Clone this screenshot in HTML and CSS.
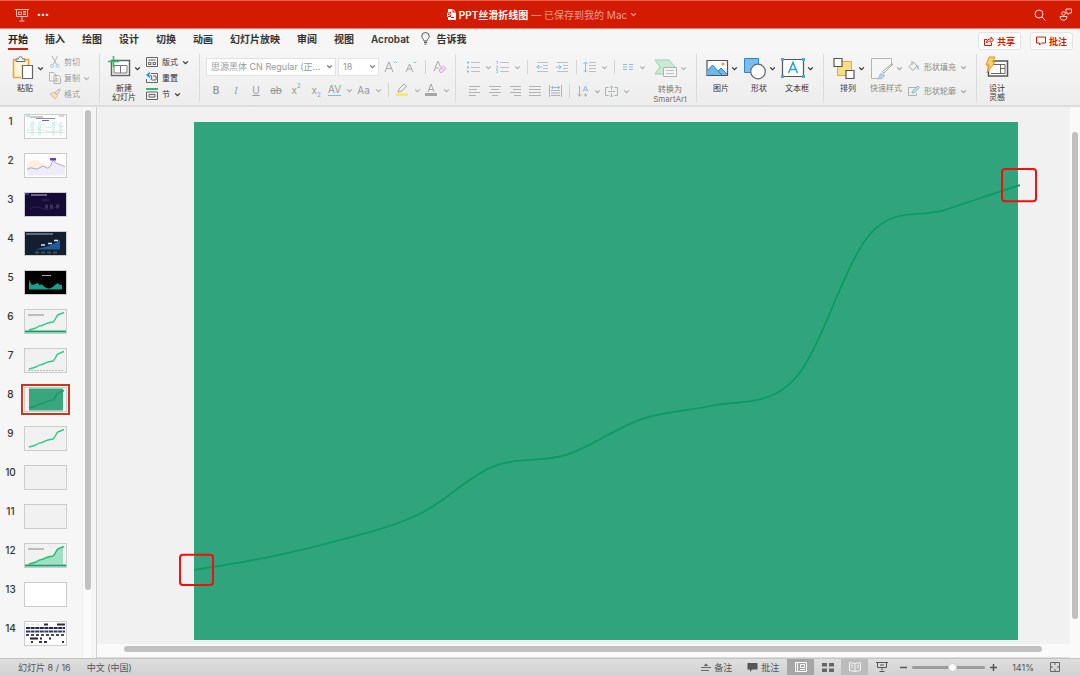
FILE: index.html
```
<!DOCTYPE html>
<html lang="zh-CN">
<head>
    <meta charset="UTF-8">
    <meta name="viewport" content="width=device-width, initial-scale=1.0">
    <title>PPT丝滑折线图</title>
    <link rel="stylesheet" href="styles.css">
</head>
<body>

<svg class="defs" aria-hidden="true">
    <symbol id="chev" viewBox="0 0 6 6"><path d="M1 2l2 2 2-2" fill="none" stroke="currentColor" stroke-width="1.1"/></symbol>
    <symbol id="line" viewBox="0 0 41 22"><path d="M4 19.500Q8 18.500 11 17.500C13 16 15 15 17 15Q20 13.500 23 12.500L28 11.500C31 10 31 4 34 4L39 2" fill="none" stroke="currentColor" stroke-width="1.400"/></symbol>
</svg>

<header class="titlebar">
    <div class="title-left">
        <svg width="14" height="14" viewBox="0 0 14 14" fill="none" stroke="#f6bdb4"><path d="M0 1.500h14M1.500 1.500v7h11v-7M7 8.500v4M4.500 13h5"/><path d="M3.500 4h3v2.500h-3zM8 3.500h3M8 5h3M8 6.500h3"/></svg>
        <button class="dots" aria-label="更多">•••</button>
    </div>
    <div class="title-doc">
        <svg width="10" height="11" viewBox="0 0 10 11"><path d="M2 0h5l3 3v8H2z" fill="#fff"/><path d="M7 0v3h3" fill="none" stroke="#d21b00"/><path d="M0 3h5v5H0z" fill="#d21b00"/><path d="M1.500 8V4h1.500a1.200 1.200 0 0 1 0 2.500H1.500" fill="none" stroke="#fff"/><path d="M5 8.500h3" stroke="#d21b00"/></svg>
        <b>PPT丝滑折线图</b>
        <span>— 已保存到我的 Mac</span>
        <svg width="7" height="7"><use href="#chev"/></svg>
    </div>
    <div class="title-right">
        <button aria-label="搜索"><svg width="12" height="12" viewBox="0 0 12 12" fill="none" stroke="#fbd9d4"><circle cx="5" cy="5" r="4"/><path d="M8 8l3.500 3.500"/></svg></button>
        <button aria-label="协作"><svg width="13" height="13" viewBox="0 0 13 13" fill="none" stroke="#fbd9d4"><path d="M7 1h5.500v4h-2L9 6.500V5H7zM1 8.500h7c0 5-7 5-7 0z"/><circle cx="4.500" cy="5.500" r="1.800"/></svg></button>
    </div>
</header>

<nav class="tabs">
    <a href="#" class="active">开始</a>
    <a href="#">插入</a>
    <a href="#">绘图</a>
    <a href="#">设计</a>
    <a href="#">切换</a>
    <a href="#">动画</a>
    <a href="#">幻灯片放映</a>
    <a href="#">审阅</a>
    <a href="#">视图</a>
    <a href="#">Acrobat</a>
    <a href="#" class="tell"><svg width="9" height="13" viewBox="0 0 9 13" fill="none" stroke="#555"><path d="M3 9C3 7 .8 6.500.8 4.200a3.700 3.700 0 0 1 7.400 0C8.200 6.500 6 7 6 9zM3 10.500h3M3.500 12.200h2"/></svg>告诉我</a>
    <div class="tab-actions">
        <button><svg width="10" height="10" viewBox="0 0 10 10" fill="none" stroke="#d21b00"><path d="M3 3.500H.5v6h7V7M2.500 7c0-3 2-4 4.500-4V1l2.500 3L7 6.500V5C5 5 3.500 5.500 2.500 7z"/></svg>共享</button>
        <button><svg width="10" height="10" viewBox="0 0 10 10" fill="none" stroke="#d21b00"><path d="M.5 1h9v6H5.500L3.500 9V7h-3z"/></svg>批注</button>
    </div>
</nav>

<div class="ribbon">
    <section class="group clipboard">
        <button class="big">
            <span class="big-icon">
                <svg width="24" height="24" viewBox="0 0 24 24" fill="none"><path d="M10 21.500H2.500V3.500h15V9" stroke="#f2a33a" stroke-width="1.600" fill="#fff4dc"/><path d="M5 5.500V3h2.500c0-3 4-3 4 0H14v2.500z" fill="#fff" stroke="#666"/><path d="M11.500 9.500h10v13h-10z" fill="#fff" stroke="#666" stroke-width="1.200"/></svg>
                <svg width="7" height="7"><use href="#chev"/></svg>
            </span>
            <span class="big-label">粘贴</span>
        </button>
        <div class="stack dim">
            <button><svg width="12" height="12" viewBox="0 0 12 12" fill="none" stroke="#999"><path d="M3 0l4.500 8.500M8.500 0L4 8.500"/><g stroke="#7fb9dd"><circle cx="3" cy="9.800" r="1.500"/><circle cx="8.500" cy="9.800" r="1.500"/></g></svg>剪切</button>
            <button><svg width="12" height="12" viewBox="0 0 12 12" fill="#f6f6f6" stroke="#999"><path d="M.5.5H5L7 3v6H.5zM5 3.500h4.500l2 2v6H5zM6.500 7h3M6.500 9h3"/></svg>复制<svg width="7" height="7"><use href="#chev"/></svg></button>
            <button><svg width="12" height="12" viewBox="0 0 12 12" fill="none"><path d="M1 6l4-2 3.500 3.500L6 11z" fill="#f8dcb8" stroke="#e5a76a"/><path d="M6 4.500L10.500.8l.8 1L8 6.500z" stroke="#999"/></svg>格式</button>
        </div>
    </section>

    <section class="group slides">
        <button class="big">
            <span class="big-icon">
                <svg width="24" height="24" viewBox="0 0 24 24" fill="none"><path d="M3.500 4.500h18v15h-18z" stroke="#666" stroke-width="1.500" fill="#fff"/><path d="M6 9.500h13v7.500H6zM12.500 9.500V17" stroke="#777"/><path d="M5.500 0v11M0 5.500h11" stroke="#2abf6a" stroke-width="1.600"/></svg>
                <svg width="7" height="7"><use href="#chev"/></svg>
            </span>
            <span class="big-label">新建<br>幻灯片</span>
        </button>
        <div class="stack">
            <button><svg width="12" height="10" viewBox="0 0 12 10" fill="none" stroke="#666"><path d="M.5.5h11v9H.5zM2.500 3h7M2.500 5.500v2h2.500v-2zM7 5.500h2.500v2H7z"/></svg>版式<svg width="7" height="7"><use href="#chev"/></svg></button>
            <button><svg width="12" height="12" viewBox="0 0 12 12" fill="none" stroke="#666"><path d="M5 1.500h6.500v9H.5V7M7 4h3M6 8h4V4"/><path d="M4 .5L1 3l3 2.500M1 3h2.500C6 3 6 6 5 8" stroke="#2389d6" stroke-width="1.200"/></svg>重置</button>
            <button><svg width="12" height="12" viewBox="0 0 12 12" fill="none" stroke="#666"><path d="M0 1h12" stroke="#36b877" stroke-width="2"/><path d="M.5 4h11v7.500H.5zM3 6.500h6V9H3z"/></svg>节<svg width="7" height="7"><use href="#chev"/></svg></button>
        </div>
    </section>

    <section class="group font dim">
        <div class="row">
            <div class="combo wide"><select aria-label="字体"><option>思源黑体 CN Regular (正…</option></select><svg width="7" height="7"><use href="#chev"/></svg></div>
            <div class="combo"><select aria-label="字号"><option>18</option></select><svg width="7" height="7"><use href="#chev"/></svg></div>
            <button class="tool" aria-label="增大字号"><svg width="14" height="14" viewBox="0 0 14 14" fill="none" stroke="#888"><path d="M1 12L5 2l4 10M2.500 8.500h5"/><path d="M10 3l1.500-1.500L13 3" stroke="#5badd9"/></svg></button>
            <button class="tool" aria-label="减小字号"><svg width="14" height="14" viewBox="0 0 14 14" fill="none" stroke="#888"><path d="M2 12l3.500-8L9 12M3.200 9h4.500"/><path d="M9.500 1.500L11 3l1.500-1.500" stroke="#5badd9"/></svg></button>
            <i class="sep"></i>
            <button class="tool" aria-label="清除格式"><svg width="14" height="14" viewBox="0 0 14 14" fill="none" stroke="#888"><path d="M1 11L5 1l2.500 6M2.500 8H6"/><path d="M6 10l4.500-4 2.500 2.500L9 12.500H7.500zM8.500 8l2.500 2.500" stroke="#cf78cd" fill="#f4dff3"/></svg></button>
        </div>
        <div class="row">
            <button class="tool"><b>B</b></button>
            <button class="tool serif"><em>I</em></button>
            <button class="tool"><u>U</u></button>
            <button class="tool"><s>ab</s></button>
            <button class="tool">x<sup>2</sup></button>
            <button class="tool">x<sub>2</sub></button>
            <button class="tool drop"><span class="spaced">AV</span><svg width="7" height="7"><use href="#chev"/></svg></button>
            <button class="tool drop">Aa<svg width="7" height="7"><use href="#chev"/></svg></button>
            <i class="sep"></i>
            <button class="tool drop" aria-label="突出显示"><svg width="14" height="14" viewBox="0 0 14 14"><path d="M3 9l1-3 5-5 2.500 2-4.500 5z" fill="none" stroke="#888"/><path d="M1 11.500h12" stroke="#eeec50" stroke-width="3"/></svg><svg width="7" height="7"><use href="#chev"/></svg></button>
            <button class="tool drop" aria-label="字体颜色"><svg width="14" height="14" viewBox="0 0 14 14" fill="none" stroke="#888"><path d="M4 9l3-8 3 8M5 6.500h4"/><path d="M1 11.500h12" stroke-width="3"/></svg><svg width="7" height="7"><use href="#chev"/></svg></button>
        </div>
    </section>

    <section class="group paragraph dim">
        <div class="para-rows">
            <div class="row">
                <button class="tool drop" aria-label="项目符号"><svg width="13" height="12" viewBox="0 0 13 12" stroke="#aaa"><path d="M4 1.500h9M4 6.500h9M4 10.500h9"/><path d="M0 1.500h2M0 6.500h2M0 10.500h2" stroke="#5badd9" stroke-width="2"/></svg><svg width="7" height="7"><use href="#chev"/></svg></button>
                <button class="tool drop" aria-label="编号"><svg width="13" height="12" viewBox="0 0 13 12" fill="none" stroke="#aaa"><path d="M4 1.500h9M4 6.500h9M4 10.500h9"/><path d="M0 .5h1.500v2.500M0 5h1.500v1.500L0 8h2M0 9.500h1.500V12H0" stroke="#5badd9" stroke-width=".8"/></svg><svg width="7" height="7"><use href="#chev"/></svg></button>
                <i class="sep"></i>
                <button class="tool" aria-label="减少缩进"><svg width="12" height="11" viewBox="0 0 12 11" fill="none" stroke="#aaa"><path d="M1 .5h11M7 3.500h5M7 6.500h5M1 9.500h11"/><path d="M6 5H.5M3 3L1 5l2 2" stroke="#5badd9"/></svg></button>
                <button class="tool" aria-label="增加缩进"><svg width="12" height="11" viewBox="0 0 12 11" fill="none" stroke="#aaa"><path d="M1 .5h11M7 3.500h5M7 6.500h5M1 9.500h11"/><path d="M0 5h5.500M3 3l2 2-2 2" stroke="#5badd9"/></svg></button>
                <i class="sep"></i>
                <button class="tool drop" aria-label="行距"><svg width="13" height="12" viewBox="0 0 13 12" fill="none" stroke="#aaa"><path d="M6 1.500h7M6 4.500h7M6 7.500h7M6 10.500h7"/><path d="M2.500.8v10.400M.5 3l2-2 2 2M.5 9l2 2 2-2" stroke="#5badd9"/></svg><svg width="7" height="7"><use href="#chev"/></svg></button>
                <i class="sep"></i>
                <button class="tool drop" aria-label="分栏"><svg width="13" height="8" viewBox="0 0 13 8" stroke="#5badd9"><path d="M2 1.500h4M2 4h4M2 6.500h4M8 1.500h4M8 4h4M8 6.500h4"/></svg><svg width="7" height="7"><use href="#chev"/></svg></button>
            </div>
            <div class="row">
                <button class="tool" aria-label="左对齐"><svg width="12" height="11" viewBox="0 0 12 11" stroke="#999"><path d="M0 .5h11M0 3.500h8M0 6.500h11M0 9.500h7"/></svg></button>
                <button class="tool" aria-label="居中"><svg width="12" height="11" viewBox="0 0 12 11" stroke="#999"><path d="M0 .5h12M2 3.500h8M0 6.500h12M3 9.500h6"/></svg></button>
                <button class="tool" aria-label="右对齐"><svg width="12" height="11" viewBox="0 0 12 11" stroke="#999"><path d="M1 .5h11M4 3.500h8M1 6.500h11M5 9.500h7"/></svg></button>
                <button class="tool" aria-label="两端对齐"><svg width="12" height="11" viewBox="0 0 12 11" stroke="#999"><path d="M0 .5h12M0 3.500h12M0 6.500h12M0 9.500h12"/></svg></button>
                <button class="tool" aria-label="分散对齐"><svg width="13" height="12" viewBox="0 0 13 12" fill="none" stroke="#999"><path d="M2 5.500h9M2 8h9M2 10.500h9"/><path d="M.5 0v12M12.500 0v12M2 2.500h9M4 1L2.500 2.500 4 4M9 1l1.500 1.500L9 4" stroke="#5badd9"/></svg></button>
                <i class="sep"></i>
                <button class="tool drop" aria-label="文字方向"><svg width="12" height="13" viewBox="0 0 12 13" fill="none" stroke="#999"><path d="M2.500 1v10M.5 9l2 2.500 2-2.500M8.500 8v3M7 9.500l1.500 2 1.500-2"/><path d="M6 6.500L8.500 1 11 6.500M7 5h3" stroke="#5badd9"/></svg><svg width="7" height="7"><use href="#chev"/></svg></button>
                <button class="tool drop" aria-label="对齐文本"><svg width="13" height="13" viewBox="0 0 13 13" fill="none" stroke="#999"><path d="M3.500 2.500h-3v8h3M9.500 2.500h3v8h-3M3 6.500h7"/><path d="M6.500 1v4M5 2.500L6.500 1 8 2.500M6.500 8v4M5 10.500L6.500 12 8 10.500" stroke="#5badd9"/></svg><svg width="7" height="7"><use href="#chev"/></svg></button>
            </div>
        </div>
        <button class="big">
            <span class="big-icon">
                <svg width="24" height="24" viewBox="0 0 24 24"><path d="M1 4h14l6 7-6 7H1l5-7z" fill="#b8e6c8" stroke="#78c496"/><path d="M9.500 11.500h13v9h-13z" fill="#f8f8f8" stroke="#999"/><path d="M12 14.500h8M12 17.500h8" stroke="#aaa"/></svg>
                <svg width="7" height="7"><use href="#chev"/></svg>
            </span>
            <span class="big-label">转换为<br>SmartArt</span>
        </button>
    </section>

    <section class="group insert">
        <button class="big">
            <span class="big-icon">
                <svg width="24" height="24" viewBox="0 0 24 24"><path d="M2 4.500h20.500v15H2z" fill="#fff" stroke="#555" stroke-width="1.200"/><path d="M2.500 14.500l5-5.500 5.500 6 3-3 6 6v1h-19.500z" fill="#6cb8ec"/><path d="M2.500 14.500l5-5.500L17 19M13.500 15l2.500-3 6 6" fill="none" stroke="#267fc0"/><circle cx="18" cy="8" r="1.500" fill="#f39a36"/></svg>
                <svg width="7" height="7"><use href="#chev"/></svg>
            </span>
            <span class="big-label">图片</span>
        </button>
        <button class="big">
            <span class="big-icon">
                <svg width="24" height="24" viewBox="0 0 24 24"><path d="M1.500 2.500h14v14h-14z" fill="#79bdf0" stroke="#2c86c7"/><circle cx="15" cy="15.500" r="7.300" fill="#fff" stroke="#666" stroke-width="1.200"/></svg>
                <svg width="7" height="7"><use href="#chev"/></svg>
            </span>
            <span class="big-label">形状</span>
        </button>
        <button class="big">
            <span class="big-icon">
                <svg width="24" height="24" viewBox="0 0 24 24"><path d="M1.500 3.500h21v17h-21z" fill="#fff" stroke="#555" stroke-width="1.200"/><path d="M7.500 17L12 6.500 16.500 17M9 13.500h6" fill="none" stroke="#2b9cd8" stroke-width="1.500"/><path d="M0 2h3v3H0zM21 2h3v3h-3zM0 19h3v3H0zM21 19h3v3h-3z" fill="#42aee5"/></svg>
                <svg width="7" height="7"><use href="#chev"/></svg>
            </span>
            <span class="big-label">文本框</span>
        </button>
    </section>

    <section class="group arrange">
        <button class="big">
            <span class="big-icon">
                <svg width="24" height="24" viewBox="0 0 24 24"><path d="M5.500 5.500h14v14h-14z" fill="#fadd86" stroke="#eda53b"/><path d="M2 2.500h8v8H2zM14 14.500h8v8h-8z" fill="#fff" stroke="#555" stroke-width="1.200"/></svg>
                <svg width="7" height="7"><use href="#chev"/></svg>
            </span>
            <span class="big-label">排列</span>
        </button>
        <button class="big dim">
            <span class="big-icon">
                <svg width="24" height="24" viewBox="0 0 24 24"><path d="M12 22.500H1.500V2.500h20V8" fill="#f7f7f7" stroke="#999"/><path d="M23 8l-9 9-1.500-1.500L21 8.500z" fill="#f7f7f7" stroke="#888"/><path d="M7 22.500c3 0 2-4 4.500-5.500l3 2c-1 4-5 4.500-7.500 3.500z" fill="#95c6e6" stroke="#7ab2d6"/></svg>
                <svg width="7" height="7"><use href="#chev"/></svg>
            </span>
            <span class="big-label">快速样式</span>
        </button>
        <div class="stack two dim">
            <button><svg width="12" height="12" viewBox="0 0 12 12" fill="none" stroke="#888"><path d="M1 5.500L5.500 1 9 5 5 9.500zM4 0v4"/><path d="M10 4.500v4" stroke="#5badd9" stroke-width="1.500"/></svg>形状填充<svg width="7" height="7"><use href="#chev"/></svg></button>
            <button><svg width="12" height="12" viewBox="0 0 12 12" fill="none" stroke="#999"><path d="M8 2.500H.5v8h8V8"/><path d="M4 8l1-2.500L10 1l1.500 1.500-5 5z" fill="#b5daf0" stroke="#4da5d8"/></svg>形状轮廓<svg width="7" height="7"><use href="#chev"/></svg></button>
        </div>
    </section>

    <section class="group designer">
        <button class="big">
            <span class="big-icon">
                <svg width="24" height="24" viewBox="0 0 24 24"><path d="M3.500 5h19v15h-19z" fill="#fff" stroke="#555" stroke-width="1.500"/><path d="M6 8.500h14v9H6M15.500 8.500v9M15.500 12.500H20" fill="none" stroke="#666"/><path d="M4 1h6L7.500 6H10L2 17l2-8H1z" fill="#fcd06b" stroke="#ee8f2d"/></svg>
            </span>
            <span class="big-label">设计<br>灵感</span>
        </button>
    </section>
</div>

<main class="workspace">
    <aside class="sidebar">
        <ol class="thumbs">
            <li><span>1</span><div class="thumb white"><svg viewBox="0 0 41 22"><path d="M1 .5h4" stroke="#5fc9e0"/><path d="M34 .5h5" stroke="#ee8fa3"/><path d="M5 1.500h13M11 3h19" stroke="#777" stroke-width=".8"/><path d="M17 5h7" stroke="#8057d8"/><path d="M6 6h3v14H6zM13 6h3v14h-3zM27 6h3v14h-3zM34 6h3v14h-3z" fill="#dcf4f6"/><path d="M2 14c4-1 4-7 6-7s3 6 6 6 2-6 4-4 5 4 8 3 2-5 4-5 4 5 9 4M2 17h38" fill="none" stroke="#c0eaf0" stroke-width=".8"/><path d="M2 15q9-3 18 0t20-1" fill="none" stroke="#f4ddb5" stroke-width=".7"/></svg></div></li>
            <li><span>2</span><div class="thumb white"><svg viewBox="0 0 41 22"><path d="M2 10c4-3 7-7 12-3s8 4 13 2v11H2z" fill="#fdeedd"/><path d="M2 15q4-3 7-1t6-1 6 0 7-7l4 3 8 3v9H2z" fill="#eeecf9"/><path d="M2 15q4-3 7-1t6-1 6 0 7-7l4 3 8 3" fill="none" stroke="#9b91d5" stroke-width=".8"/><path d="M25 3.500h6v2.500h-6z" fill="#6841b6"/></svg></div></li>
            <li><span>3</span><div class="thumb purple"><svg viewBox="0 0 41 22"><path d="M0 .5h4" stroke="#6c4ce0"/><path d="M6 1.500h16" stroke="#c8c1dc"/><path d="M5 15q8-3 12 0t18-3" fill="none" stroke="#30264c"/><path d="M20 11h3v4h-3zM25 11h3v4h-3zM31 11h3v4h-3z" fill="#3a3158"/><path d="M17 6.500h7" stroke="#40355b"/></svg></div></li>
            <li><span>4</span><div class="thumb navy"><svg viewBox="0 0 41 22"><path d="M1 1.500h27" stroke="#aab7c3"/><path d="M10 17l8-2 7-2 6-3 4-3v10z" fill="#1e5c9e"/><path d="M16 12.500h4M23 11h4M29 8h4" stroke="#d9e6f4" stroke-width="1.500"/><path d="M10 20h24" stroke="#43515d" stroke-width="2" stroke-dasharray="4 2"/></svg></div></li>
            <li><span>5</span><div class="thumb black"><svg viewBox="0 0 41 22"><path d="M17 4h9" stroke="#aaa"/><path d="M4 8c2 4 2 6 5 5s4-2 5 0 2-1 3 0 4 4 7 4 6-4 8-5 2 3 5 1v5H4z" fill="#17a089"/></svg></div></li>
            <li><span>6</span><div class="thumb"><svg viewBox="0 0 41 22" color="#2fcb83"><path d="M3 4.500h16" stroke="#888"/><use href="#line"/><path d="M0 21h41" stroke="#18a06c" stroke-width="2"/></svg></div></li>
            <li><span>7</span><div class="thumb"><svg viewBox="0 0 41 22" color="#2fcb83"><use href="#line"/><path d="M3 21h36" stroke="#bbb" stroke-dasharray="2 1"/></svg></div></li>
            <li class="current"><span>8</span><div class="thumb"><svg viewBox="0 0 41 22" color="#169a6a"><path d="M4 0h34v22H4z" fill="#3aa67e"/><use href="#line"/></svg></div></li>
            <li><span>9</span><div class="thumb"><svg viewBox="0 0 41 22" color="#2fcb83"><use href="#line"/></svg></div></li>
            <li><span>10</span><div class="thumb"></div></li>
            <li><span>11</span><div class="thumb"></div></li>
            <li><span>12</span><div class="thumb"><svg viewBox="0 0 41 22" color="#22b977"><path d="M4 19.500l7-2 6-3 6-2 5-1 4-7 6-2v17H4z" fill="#9ee0c2"/><path d="M3 4.500h16" stroke="#888"/><use href="#line"/><path d="M0 21h41" stroke="#18a06c" stroke-width="2"/></svg></div></li>
            <li><span>13</span><div class="thumb white"></div></li>
            <li><span>14</span><div class="thumb white"><svg viewBox="0 0 41 22" fill="none" stroke-width="2"><path d="M19 2h4M32 2h8" stroke="#2c2856"/><path d="M1 2h16" stroke="#dbe9ef" stroke-dasharray="3 2"/><path d="M1 5.500h39" stroke="#281f5a" stroke-dasharray="4 .6"/><path d="M1 9h39" stroke="#283a5c" stroke-dasharray="4 .6"/><path d="M1 12.500h39" stroke="#454464" stroke-dasharray="3 2"/><path d="M5 16h8M15 16h2M24 16h2" stroke="#222"/><path d="M6 19.500h2M14 19.500h3M19 19.500h3M37 19.500h2" stroke="#343258"/></svg></div></li>
        </ol>
        <div class="side-scroll"><div class="bar"></div></div>
    </aside>

    <div class="editor">
        <div class="canvas">
            <div class="slide">
                <svg viewBox="0 0 824 517" preserveAspectRatio="none" fill="none">
                    <path d="M0 447C13 445 51 439 76 434C101 429 126 423 151 416C176 409 201 403 226 391C251 379 274 354 299 344C324 334 348 340 373 332C398 324 424 304 449 296C474 288 499 288 524 282C549 278 577 283 602 255C627 227 651 140 676 112C701 84 725 96 750 88C775 80 800 71 826 63" stroke="#0a9a62" stroke-width="1.700"/>
                    <g stroke="#f80d0d" stroke-width="2">
                        <rect x="-14" y="432" width="33" height="30" rx="3"/>
                        <rect x="808" y="47" width="34" height="32" rx="3"/>
                    </g>
                </svg>
            </div>
        </div>
        <div class="v-scroll"><div class="bar"></div></div>
        <div class="h-scroll"><div class="bar"></div></div>
    </div>
</main>

<footer class="status">
    <span>幻灯片 8 / 16</span>
    <span>中文 (中国)</span>
    <div class="status-right">
        <button class="note"><svg width="10" height="9" viewBox="0 0 10 9"><path d="M0 4.500h10M0 7.500h8" stroke="#666"/><path d="M2.500 3L5 .5 7.500 3z" fill="#666"/></svg>备注</button>
        <button class="note"><svg width="11" height="9" viewBox="0 0 11 9"><path d="M.5 0h10v6.500H5L3 9V6.500H.5z" fill="#555"/></svg>批注</button>
        <div class="views">
            <button class="on" aria-label="普通视图"><svg width="12" height="10" viewBox="0 0 12 10" fill="none" stroke="#fff"><path d="M.5.500h11v9H.5zM2.500 0v10M5.500 2.500h4v3h-4zM5 7.500h5"/></svg></button>
            <button aria-label="幻灯片浏览"><svg width="12" height="9" viewBox="0 0 12 9" fill="#666"><path d="M0 0h5v3.500H0zM7 0h5v3.500H7zM0 5.500h5V9H0zM7 5.500h5V9H7z"/></svg></button>
            <button class="half" aria-label="阅读视图"><svg width="12" height="10" viewBox="0 0 12 10" fill="none" stroke="#f4f4f4"><path d="M6 1.500L.5.5v8L6 9.500l5.500-1v-8zM6 1.500v8M2 3l2 .5M2 5l2 .5M8 3.500l2-.5M8 5.500l2-.5"/></svg></button>
            <button aria-label="幻灯片放映"><svg width="12" height="10" viewBox="0 0 12 10" fill="none" stroke="#555"><path d="M0 .5h12M1.500.5v5h9v-5M6 5.500v3M3.500 9.500h5M4 3h4"/></svg></button>
        </div>
        <button class="zoom-step" aria-label="缩小"><svg width="7" height="7" viewBox="0 0 7 7"><path d="M0 3.500h7" stroke="#555" stroke-width="1.500"/></svg></button>
        <input type="range" class="zoom" min="0" max="100" value="56" aria-label="缩放">
        <button class="zoom-step" aria-label="放大"><svg width="7" height="7" viewBox="0 0 7 7"><path d="M0 3.500h7M3.500 0v7" stroke="#555" stroke-width="1.500"/></svg></button>
        <span class="percent">141%</span>
        <button class="fit" aria-label="适应窗口"><svg width="10" height="10" viewBox="0 0 10 10" fill="none" stroke="#666"><path d="M.5.5h9v9h-9zM5 1v2M5 7v2M1 5h2M7 5h2"/></svg></button>
    </div>
</footer>

</body>
</html>
```
FILE: styles.css
```
* {
    box-sizing: border-box;
}
body {
    margin: 0;
    height: 100vh;
    display: flex;
    flex-direction: column;
    overflow: hidden;
    font-family: Inter, "Noto Sans CJK SC", sans-serif;
    font-size: 9px;
    color: #333;
    background-color: #f6f6f6;
}
button, select, input {
    font: inherit;
    color: inherit;
    background: none;
    border: 0;
    padding: 0;
    margin: 0;
}
svg {
    flex: none;
    display: block;
}
.defs {
    position: absolute;
    width: 0;
    height: 0;
}

/* Barra de título */
.titlebar {
    height: 29px;
    flex: none;
    display: grid;
    grid-template-columns: 1fr auto 1fr;
    align-items: center;
    padding: 0 8px 0 15px;
    background-color: #d21b00;
    border-top: 1px solid #e8604c;
    border-bottom: 1px solid #ea7b6b;
    color: #f09c90;
    font-size: 10px;
}
.title-left, .title-doc, .title-right {
    display: flex;
    align-items: center;
}
.title-left {
    gap: 8px;
}
.title-doc {
    gap: 3px;
    padding-right: 4px;
}
.title-doc b {
    color: #fff;
    font-weight: 600;
}
.title-right {
    justify-content: flex-end;
    gap: 13px;
}
.dots {
    color: #fff;
    font-size: 7px;
}

/* Abas */
.tabs {
    height: 21px;
    flex: none;
    display: flex;
    align-items: center;
    gap: 17px;
    padding: 0 7px 0 8px;
    background-color: #f6f6f6;
    font-size: 10px;
    font-weight: 600;
}
.tabs a {
    line-height: 18px;
    color: #333;
    text-decoration: none;
    border-bottom: 2px solid transparent;
}
.tabs .active {
    color: #222;
    border-color: #d21b00;
}
.tabs .tell {
    display: flex;
    align-items: center;
    gap: 6px;
    margin-left: -5px;
}
.tab-actions {
    display: flex;
    gap: 9px;
    margin-left: auto;
    padding-top: 3px;
}
.tab-actions button {
    display: flex;
    align-items: center;
    gap: 3px;
    height: 18px;
    padding: 0 5px;
    background-color: #fff;
    border: 1px solid #e4e4e4;
    border-radius: 3px;
    color: #d21b00;
    font-size: 9px;
    font-weight: 700;
}

/* Faixa de opções */
.ribbon {
    height: 57px;
    flex: none;
    display: flex;
    padding: 4px 0 3px;
    background: linear-gradient(#f6f6f6, #ededed);
    border-bottom: 2px solid #dcdcdc;
    font-size: 8px;
}
.group {
    display: flex;
    flex: none;
    padding: 0 0 0 8px;
    border-right: 1px solid #dadada;
}
.group:last-child {
    border-right: 0;
}
.dim {
    color: #999;
}
.dim svg {
    opacity: 0.7;
}
.clipboard {
    width: 100px;
    padding-left: 11px;
}
.slides {
    width: 100px;
}
.font {
    width: 256px;
    padding-left: 6px;
}
.paragraph {
    width: 241px;
}
.insert {
    width: 127px;
}
.arrange {
    width: 153px;
}
.big {
    width: 38px;
    display: flex;
    flex-direction: column;
    align-items: flex-start;
    line-height: 9px;
}
.big-icon {
    display: flex;
    align-items: center;
    gap: 2px;
    padding: 2px 0 4px;
}
.big-label {
    width: 32px;
    display: flex;
    justify-content: center;
    text-align: center;
    white-space: nowrap;
}
.clipboard .big-label {
    width: 28px;
}
.designer .big-label {
    width: 24px;
}
.paragraph .big-label {
    line-height: 10px;
    color: #777;
}
.stack {
    display: flex;
    flex-direction: column;
    justify-content: space-between;
    line-height: 12px;
}
.stack button {
    display: flex;
    align-items: center;
    gap: 4px;
    height: 16px;
}
.clipboard .stack button {
    gap: 3px;
}
.stack.two {
    justify-content: flex-start;
    gap: 8px;
    padding-top: 5px;
}
.stack.two, .arrange .dim {
    color: #888;
}
.row {
    display: flex;
    align-items: center;
    height: 24px;
}
.font {
    flex-direction: column;
}
.font, .para-rows {
    padding-top: 1px;
}
.paragraph .row {
    padding-left: 1px;
}
.para-rows {
    width: 190px;
}
.combo {
    display: flex;
    align-items: center;
    width: 41px;
    height: 18px;
    padding: 0 2px 0 4px;
    margin-right: 2px;
    background-color: #fff;
    border: 1px solid #e2e2e2;
    font-size: 9px;
}
.combo.wide {
    width: 130px;
}
.combo svg {
    opacity: 1;
    color: #777;
}
.combo select {
    appearance: none;
    flex: 1;
    min-width: 0;
    outline: 0;
}
.tool {
    display: flex;
    align-items: center;
    justify-content: center;
    width: 20px;
    height: 20px;
    font-size: 10px;
}
.tool.drop {
    width: 29px;
    gap: 5px;
}
.tool b {
    font-weight: 600;
}
.serif {
    font-family: "Liberation Serif", serif;
}
.tool sup, .tool sub {
    font-size: 6px;
    line-height: 6px;
    color: #5badd9;
}
.tool sup {
    align-self: flex-start;
    padding-top: 3px;
}
.tool sub {
    align-self: flex-end;
    padding-bottom: 2px;
}
.spaced {
    border-bottom: 1px solid #7cbce0;
    line-height: 11px;
}
.sep {
    width: 1px;
    height: 14px;
    margin: 0 4px;
    background-color: #d4d4d4;
}

/* Área de trabalho */
.workspace {
    flex: 1;
    min-height: 0;
    display: flex;
}
.sidebar {
    width: 97px;
    flex: none;
    display: flex;
    justify-content: space-between;
    border-right: 1px solid #d0d0d0;
    overflow: hidden;
}
.thumbs {
    list-style: none;
    margin: 0;
    padding: 5px 0 0;
    font-size: 10px;
}
.thumbs li {
    display: flex;
    height: 39px;
}
.thumbs span {
    width: 21px;
    padding-top: 2px;
    text-align: center;
    line-height: 14px;
    font-weight: 500;
}
.thumb {
    width: 43px;
    height: 25px;
    margin: 2px 3px;
    background-color: #f1f1f1;
    border: 1px solid #ccc;
}
.thumb svg {
    width: 100%;
    height: 100%;
}
.thumb.white {
    background-color: #fff;
}
.thumb.purple {
    background-color: #160a36;
}
.thumb.navy {
    background-color: #121f2e;
}
.thumb.black {
    background-color: #000;
}
.current .thumb {
    outline: 2px solid #cb3518;
    outline-offset: 1px;
}
.side-scroll {
    width: 11px;
    height: 100%;
    margin-right: 3px;
    padding: 3px 2px;
    background-color: #fafafa;
    border-left: 1px solid #eee;
    border-right: 1px solid #eee;
}
.bar {
    background-color: #c1c1c1;
    border-radius: 3px;
}
.side-scroll .bar {
    width: 6px;
    height: 88%;
}
.editor {
    flex: 1;
    min-width: 0;
    display: grid;
    grid-template-columns: 1fr 10px;
    grid-template-rows: 1fr 14px;
    background-color: #fafafa;
}
.canvas {
    display: flex;
    padding: 15px 52px 4px 97px;
    background-color: #f1f1f1;
}
.slide {
    flex: 1;
    background-color: #30a57d;
}
.slide svg {
    width: 100%;
    height: 100%;
    overflow: visible;
}
.v-scroll {
    padding: 25px 2px;
}
.v-scroll .bar {
    height: 100%;
}
.h-scroll {
    padding: 2px 28px 6px 27px;
    border-bottom: 1px solid #ddd;
}
.h-scroll .bar {
    height: 6px;
}

/* Barra de status */
.status {
    height: 17px;
    flex: none;
    display: flex;
    align-items: center;
    gap: 16px;
    padding-left: 18px;
    background: linear-gradient(#dedede, #d2d2d2);
    border-top: 1px solid #c2c2c2;
    color: #555;
}
.status-right {
    display: flex;
    align-items: center;
    height: 100%;
    margin-left: auto;
}
.note {
    display: flex;
    align-items: center;
    gap: 3px;
    margin-right: 15px;
}
.note + .views {
    margin-left: -7px;
}
.views {
    display: flex;
    height: 100%;
}
.views button {
    width: 27px;
    display: flex;
    align-items: center;
    justify-content: center;
}
.views .on {
    background-color: #a6a6a6;
}
.views .half {
    background-color: #bcbcbc;
}
.zoom-step {
    margin: 0 5px;
}
.zoom {
    appearance: none;
    width: 73px;
    height: 10px;
}
.zoom::-webkit-slider-runnable-track {
    height: 3px;
    background-color: #9c9c9c;
    border-radius: 2px;
}
.zoom::-webkit-slider-thumb {
    appearance: none;
    width: 9px;
    height: 9px;
    margin-top: -3px;
    background-color: #fff;
    border: 1px solid #ccc;
    border-radius: 50%;
}
.percent {
    margin: 0 16px 0 10px;
}
.fit {
    margin-right: 20px;
}
```
